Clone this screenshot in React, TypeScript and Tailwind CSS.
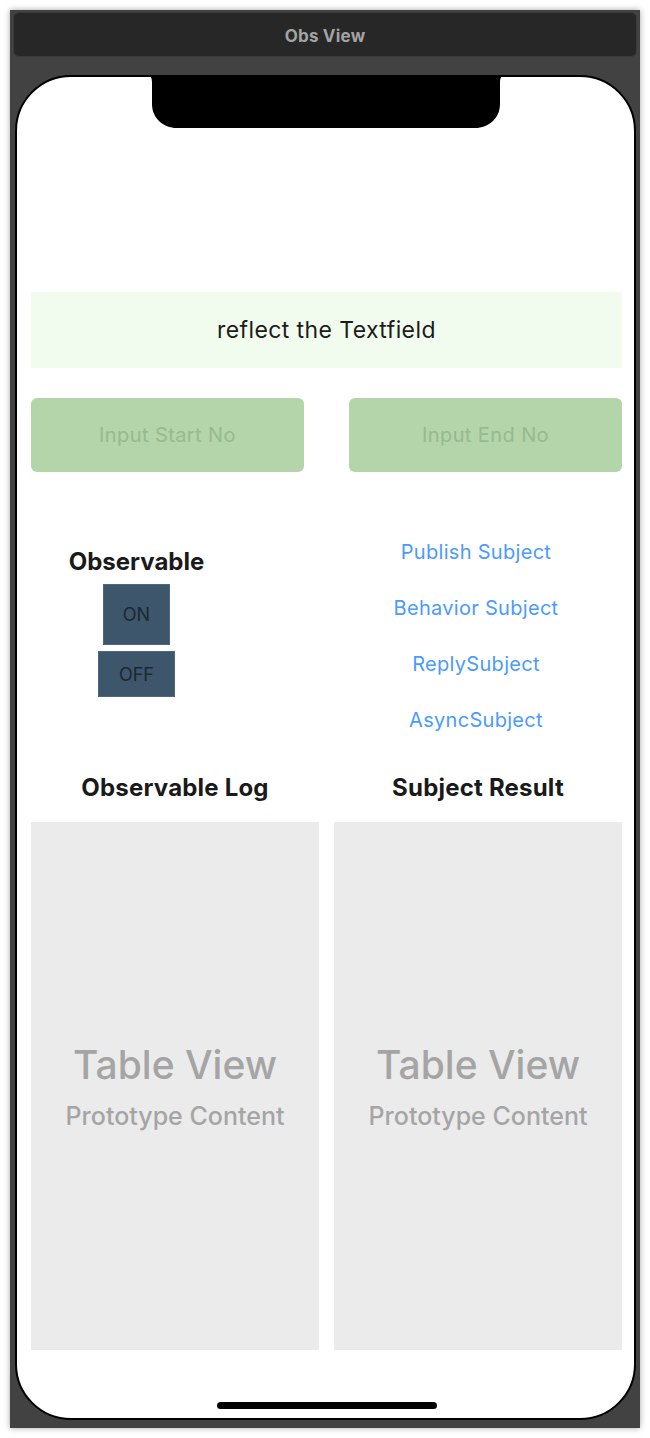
import React from "react";

const font = { fontFamily: "Inter, 'Noto Sans', 'Liberation Sans', sans-serif" };

export default function App() {
  return (
    <div className="w-[650px] h-[1438px] bg-white pt-[10px] px-[10px]" style={font}>
      <div className="w-[630px] h-[1418px] bg-[#424242] shadow-[0_0_6px_rgba(0,0,0,0.35)] flex flex-col pt-[2px]">
        <div className="mx-[3px] h-[45px] rounded-[6px] bg-[#272727] border border-[#3c3c3c] flex items-center justify-center pt-[4px]">
          <span className="text-[17px] font-bold text-[#a3a3a3] tracking-[0.2px]">Obs View</span>
        </div>
        <div className="relative ml-[5px] mr-[4px] mt-[18px] h-[1345px] bg-white rounded-[56px] border-2 border-black overflow-hidden">
          <svg className="absolute top-[-2px] left-[129px]" width="360" height="53" viewBox="0 0 360 53">
            <path d="M0,0 L360,0 C355,0 354,3 354,8 L354,29 C354,43 343,53 329,53 L31,53 C17,53 6,43 6,29 L6,8 C6,3 5,0 0,0 Z" fill="#000" />
          </svg>
          <div className="absolute bottom-[9px] left-[200px] w-[220px] h-[7px] rounded-full bg-black" />

          <div className="flex flex-col pt-[215px] pl-[14px] pr-[12px]">
            <div className="h-[76px] bg-[#f2fcee] flex items-center justify-center">
              <span className="text-[23px] tracking-[0.4px] text-[#1c1c1c]">reflect the Textfield</span>
            </div>

            <div className="mt-[30px] grid grid-cols-2 gap-[45px]">
              <div className="h-[74px] rounded-[6px] bg-[#b4d4aa] flex items-center justify-center">
                <span className="text-[20px] tracking-[0.4px] text-[#97ba8f]">Input Start No</span>
              </div>
              <div className="h-[74px] rounded-[6px] bg-[#b4d4aa] flex items-center justify-center">
                <span className="text-[20px] tracking-[0.4px] text-[#97ba8f]">Input End No</span>
              </div>
            </div>

            <div className="mt-[52px] grid grid-cols-2 gap-[15px] h-[223px]">
              <div className="flex">
                <div className="ml-[36px] w-[139px] flex flex-col items-center pt-[24px]">
                  <span className="text-[24px] leading-[28px] font-bold text-[#1a1a1a] whitespace-nowrap">Observable</span>
                  <div className="mt-[8px] w-[67px] h-[61px] bg-[#3e566c] border border-[#4e677d] flex items-center justify-center">
                    <span className="text-[18px] text-[#1c2731]">ON</span>
                  </div>
                  <div className="mt-[6px] w-[77px] h-[46px] bg-[#3e566c] border border-[#4e677d] flex items-center justify-center">
                    <span className="text-[18px] text-[#1c2731]">OFF</span>
                  </div>
                </div>
              </div>
              <div className="flex flex-col items-center pr-[4px]">
                {["Publish Subject", "Behavior Subject", "ReplySubject", "AsyncSubject"].map((t) => (
                  <div key={t} className="h-[56px] flex items-center">
                    <span className="text-[20px] tracking-[0.3px] text-[#4a9bff]">{t}</span>
                  </div>
                ))}
              </div>
            </div>

            <div className="mt-[27px] grid grid-cols-2 gap-[15px]">
              <div className="h-[28px] flex items-center justify-center">
                <span className="text-[24px] tracking-[0.2px] font-bold text-[#1a1a1a]">Observable Log</span>
              </div>
              <div className="h-[28px] flex items-center justify-center">
                <span className="text-[24px] tracking-[0.2px] font-bold text-[#1a1a1a]">Subject Result</span>
              </div>
            </div>

            <div className="mt-[20px] grid grid-cols-2 gap-[15px]">
              {[0, 1].map((i) => (
                <div key={i} className="h-[528px] bg-[#ebebeb] flex flex-col items-center justify-center">
                  <span className="text-[39px] leading-[44px] font-medium text-[#a5a5a5]">Table View</span>
                  <span className="mt-[15px] text-[25px] leading-[28px] font-medium text-[#a5a5a5]">Prototype Content</span>
                </div>
              ))}
            </div>
          </div>
        </div>
      </div>
    </div>
  );
}
